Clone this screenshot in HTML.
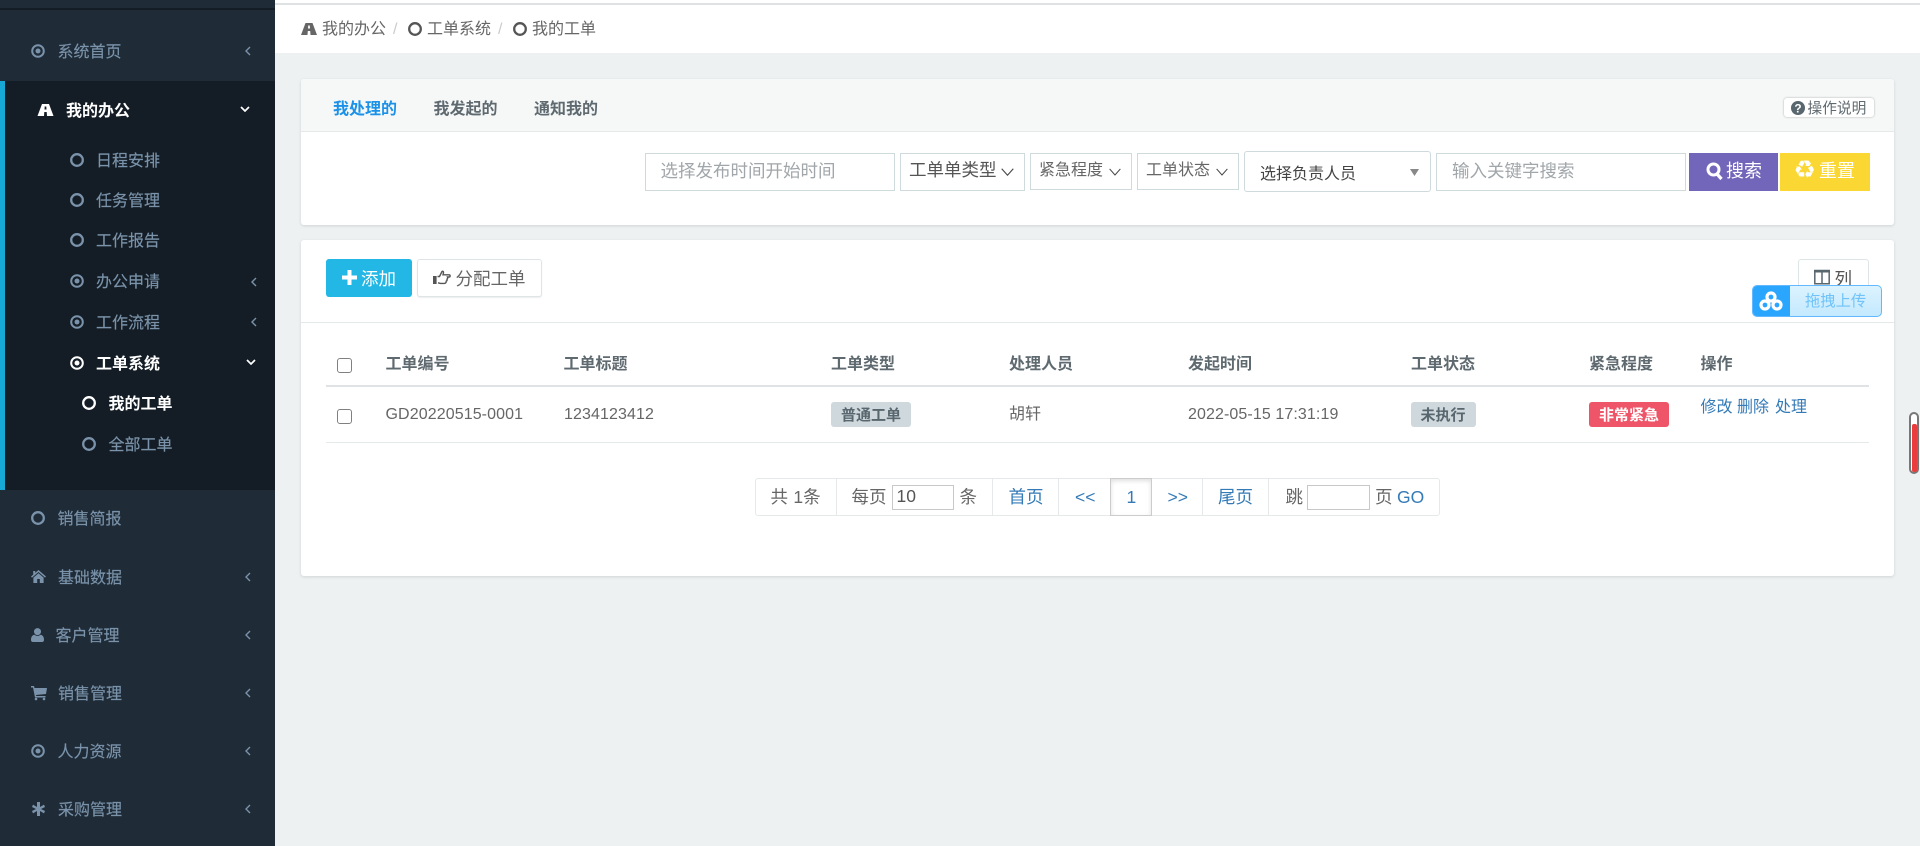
<!DOCTYPE html>
<html lang="zh-CN"><head><meta charset="utf-8"><title>我的工单</title>
<style>
html,body{margin:0;padding:0;width:1920px;height:846px;overflow:hidden;background:#edf1f2;}
body{position:relative;font-family:"Liberation Sans","Noto Sans CJK SC",sans-serif;font-size:16px;color:#58666e;}
.b,.t,svg.i{position:absolute;}
.b{box-sizing:border-box;}
.t{white-space:nowrap;line-height:20px;height:20px;margin-top:1px;}
.n{color:#7a93aa;}
div.n{margin-top:1.5px;-webkit-text-stroke:.15px #7a93aa;}
.w{color:#fff;font-weight:bold;margin-top:1.5px;}
.h{font-weight:bold;color:#5f6a70;}
.a{color:#337ab7;}
.p{color:#a0a6a9;font-size:17.5px;margin-top:0;}
.s{color:#666;font-size:17.5px;}
.pg{margin-top:-.5px;}
.card{background:#fff;box-shadow:0 1px 3px rgba(0,0,0,.12);border-radius:3px;}
.inp{background:#fff;border:1px solid #cfdadd;}
svg.i{fill:currentColor;overflow:visible;}
.stroke{fill:none;stroke:currentColor;}
.d{letter-spacing:.1px;}
</style></head><body>
<svg width="0" height="0" style="position:absolute">
<defs>
<symbol id="ring" viewBox="0 0 14 14"><circle cx="7" cy="7" r="5.8" fill="none" stroke="currentColor" stroke-width="2.3"/></symbol>
<symbol id="dot" viewBox="0 0 14 14"><circle cx="7" cy="7" r="5.8" fill="none" stroke="currentColor" stroke-width="2"/><circle cx="7" cy="7" r="2.5" fill="currentColor"/></symbol>
<symbol id="road" viewBox="0 0 16 12"><path fill="currentColor" fill-rule="evenodd" d="M4.5 0H11.5L16 12H9.5L9.2 8H6.8L6.5 12H0ZM7.2 2.5H8.8L9 5.5H7Z"/></symbol>
<symbol id="cl" viewBox="0 0 6 10"><path d="M5 1L1 5L5 9" fill="none" stroke="currentColor" stroke-width="1.4"/></symbol>
<symbol id="cd" viewBox="0 0 10 6"><path d="M1 1L5 5L9 1" fill="none" stroke="currentColor" stroke-width="1.7"/></symbol>
<symbol id="thin" viewBox="0 0 13 8"><path d="M.7.7L6.5 7.2L12.3.7" fill="none" stroke="currentColor" stroke-width="1.1"/></symbol>
</defs></svg>

<!-- sidebar -->
<div class="b" style="left:0;top:0;width:275px;height:846px;background:#1f2b37"></div>
<div class="b" style="left:0;top:8px;width:275px;height:2px;background:#141d26"></div>
<div class="b" style="left:0;top:81px;width:275px;height:409px;background:#141d26;border-left:5px solid #17a8d6"></div>

<svg class="i n" style="left:31px;top:44px" width="14" height="14"><use href="#dot"/></svg><div class="t n" style="left:57.5px;top:41px">系统首页</div><svg class="i n" style="left:245px;top:46px" width="6" height="10"><use href="#cl"/></svg>
<svg class="i" style="left:36.5px;top:104px;color:#fff" width="17" height="12"><use href="#road"/></svg><div class="t w" style="left:66px;top:100px">我的办公</div><svg class="i" style="left:240px;top:106px;color:#fff" width="10" height="6"><use href="#cd"/></svg>
<svg class="i n" style="left:70px;top:153px" width="14" height="14"><use href="#ring"/></svg><div class="t n" style="left:96px;top:150px">日程安排</div>
<svg class="i n" style="left:70px;top:193px" width="14" height="14"><use href="#ring"/></svg><div class="t n" style="left:96px;top:190px">任务管理</div>
<svg class="i n" style="left:70px;top:233px" width="14" height="14"><use href="#ring"/></svg><div class="t n" style="left:96px;top:230px">工作报告</div>
<svg class="i n" style="left:70px;top:274px" width="14" height="14"><use href="#dot"/></svg><div class="t n" style="left:96px;top:271px">办公申请</div><svg class="i n" style="left:251px;top:277px" width="6" height="10"><use href="#cl"/></svg>
<svg class="i n" style="left:70px;top:315px" width="14" height="14"><use href="#dot"/></svg><div class="t n" style="left:96px;top:312px">工作流程</div><svg class="i n" style="left:251px;top:317px" width="6" height="10"><use href="#cl"/></svg>
<svg class="i" style="left:70px;top:356px;color:#fff" width="14" height="14"><use href="#dot"/></svg><div class="t w" style="left:96px;top:353px">工单系统</div><svg class="i" style="left:246px;top:359px;color:#fff" width="10" height="6"><use href="#cd"/></svg>
<svg class="i" style="left:82px;top:396px;color:#fff" width="14" height="14"><use href="#ring"/></svg><div class="t w" style="left:108.5px;top:393px">我的工单</div>
<svg class="i n" style="left:82px;top:437px" width="14" height="14"><use href="#ring"/></svg><div class="t n" style="left:108.5px;top:434px">全部工单</div>

<svg class="i n" style="left:31px;top:511px" width="14" height="14"><use href="#ring"/></svg><div class="t n" style="left:57.5px;top:508px">销售简报</div>
<svg class="i n" style="left:31px;top:570px" width="15" height="13" viewBox="0 0 15 13"><path d="M7.5 0L15 6.5L14 7.6L7.5 2L1 7.6L0 6.5L2.2 4.6V1H4.2V2.9ZM2.4 7.6L7.5 3.3L12.6 7.6V13H8.8V9H6.2V13H2.4Z"/></svg><div class="t n" style="left:58px;top:567px">基础数据</div><svg class="i n" style="left:245px;top:572px" width="6" height="10"><use href="#cl"/></svg>
<svg class="i n" style="left:31px;top:628px" width="13" height="14" viewBox="0 0 13 14"><circle cx="6.5" cy="3.6" r="3.5"/><path d="M0 12C0 8.5 1.6 7 3.5 6.8C4.3 7.5 5.3 7.9 6.5 7.9S8.7 7.5 9.5 6.8C11.4 7 13 8.5 13 12C13 13.3 12.2 14 11 14H2C.8 14 0 13.3 0 12Z"/></svg><div class="t n" style="left:55.5px;top:625px">客户管理</div><svg class="i n" style="left:245px;top:630px" width="6" height="10"><use href="#cl"/></svg>
<svg class="i n" style="left:31px;top:686px" width="16" height="14" viewBox="0 0 16 14"><path d="M0 0H3L3.5 2H16L15 8L5 9L5.3 10H14.5V11.5H4L2 1.5H0Z"/><circle cx="5" cy="13" r="1.3"/><circle cx="13" cy="13" r="1.3"/></svg><div class="t n" style="left:58px;top:683px">销售管理</div><svg class="i n" style="left:245px;top:688px" width="6" height="10"><use href="#cl"/></svg>
<svg class="i n" style="left:31px;top:744px" width="14" height="14"><use href="#dot"/></svg><div class="t n" style="left:57.5px;top:741px">人力资源</div><svg class="i n" style="left:245px;top:746px" width="6" height="10"><use href="#cl"/></svg>
<svg class="i n" style="left:32px;top:802px" width="13" height="14" viewBox="0 0 13 14"><path d="M5 0H8V5L12 2.6L13 5L9 7L13 9L12 11.4L8 9V14H5V9L1 11.4L0 9L4 7L0 5L1 2.6L5 5Z"/></svg><div class="t n" style="left:58px;top:799px">采购管理</div><svg class="i n" style="left:245px;top:804px" width="6" height="10"><use href="#cl"/></svg>

<!-- breadcrumb -->
<div class="b" style="left:275px;top:0;width:1645px;height:4px;background:#fff"></div>
<div class="b" style="left:275px;top:3px;width:1645px;height:2px;background:#dfe2e3"></div>
<div class="b" style="left:275px;top:5px;width:1645px;height:48px;background:#fff"></div>
<svg class="i" style="left:300.5px;top:23px;color:#666" width="16" height="12"><use href="#road"/></svg>
<div class="t" style="left:322px;top:19px;color:#666">我的办公</div><div class="t" style="left:393px;top:19px;color:#ccc">/</div>
<svg class="i" style="left:408px;top:22px;color:#555" width="14" height="14"><use href="#ring"/></svg>
<div class="t" style="left:427px;top:19px;color:#666">工单系统</div><div class="t" style="left:498px;top:19px;color:#ccc">/</div>
<svg class="i" style="left:513px;top:22px;color:#555" width="14" height="14"><use href="#ring"/></svg>
<div class="t" style="left:532px;top:19px;color:#666">我的工单</div>

<!-- card 1 -->
<div class="b card" style="left:301px;top:79px;width:1593px;height:146px"></div>
<div class="b" style="left:301px;top:79px;width:1593px;height:53px;background:#f6f8f8;border-bottom:1px solid #e4e9ea;border-radius:3px 3px 0 0"></div>
<div class="t" style="left:333px;top:99px;font-weight:bold;color:#1c91e8">我处理的</div>
<div class="t h" style="left:433.5px;top:99px">我发起的</div>
<div class="t h" style="left:534px;top:99px">通知我的</div>
<div class="b" style="left:1784px;top:98px;width:90px;height:19px;background:#fff;border-radius:3px;box-shadow:0 0 2px rgba(0,0,0,.3)"></div>
<svg class="i" style="left:1791px;top:100.5px;color:#58666e" width="14" height="14" viewBox="0 0 13 13"><circle cx="6.5" cy="6.5" r="6.5"/><text x="6.5" y="10.5" font-size="11" font-weight="bold" text-anchor="middle" fill="#fff" font-family="Liberation Sans">?</text></svg>
<div class="t" style="left:1807.5px;top:98px;font-size:14.7px;color:#5f6a70">操作说明</div>

<div class="b inp" style="left:645px;top:153px;width:250px;height:38px"></div>
<div class="t p" style="left:660.5px;top:161px">选择发布时间开始时间</div>

<div class="b inp" style="left:900px;top:153px;width:125px;height:38px"></div>
<div class="t s" style="left:909px;top:160px;color:#555;margin-top:0">工单单类型</div>
<svg class="i" style="left:1001px;top:168px;color:#444" width="13" height="8"><use href="#thin"/></svg>

<div class="b inp" style="left:1030px;top:153px;width:102px;height:37px"></div>
<div class="t" style="left:1039px;top:160px;color:#666">紧急程度</div>
<svg class="i" style="left:1108.5px;top:168px;color:#444" width="12" height="8"><use href="#thin"/></svg>

<div class="b inp" style="left:1137px;top:153px;width:102px;height:37px"></div>
<div class="t" style="left:1146px;top:160px;color:#666">工单状态</div>
<svg class="i" style="left:1216px;top:168px;color:#444" width="12" height="8"><use href="#thin"/></svg>

<div class="b inp" style="left:1244px;top:151px;width:187px;height:41px;border-radius:3px"></div>
<div class="t" style="left:1260px;top:164px;color:#444">选择负责人员</div>
<svg class="i" style="left:1410px;top:169px;color:#888" width="9" height="7" viewBox="0 0 9 7"><path d="M0 0H9L4.5 7Z"/></svg>

<div class="b inp" style="left:1436px;top:153px;width:250px;height:38px"></div>
<div class="t p" style="left:1452px;top:161px">输入关键字搜索</div>

<div class="b" style="left:1689px;top:153px;width:89px;height:38px;background:#7266ba"></div>
<svg class="i" style="left:1706px;top:162px;color:#fff" width="17" height="19" viewBox="0 0 17 19"><circle cx="7.5" cy="7.5" r="5.5" fill="none" stroke="currentColor" stroke-width="3"/><path d="M11 12L15.5 17" stroke="currentColor" stroke-width="3.2" fill="none"/></svg>
<div class="t" style="left:1726px;top:161px;font-size:18px;color:#fff;margin-top:0">搜索</div>

<div class="b" style="left:1780px;top:153px;width:90px;height:38px;background:#fad733"></div>
<div class="t" style="left:1793.5px;top:160px;font-size:25px;color:#fff;font-family:'DejaVu Sans',sans-serif;font-weight:bold;margin-top:0">♻</div>
<div class="t" style="left:1819px;top:161px;font-size:18px;color:#fff;margin-top:0">重置</div>

<!-- card 2 -->
<div class="b card" style="left:301px;top:240px;width:1593px;height:336px"></div>
<div class="b" style="left:301px;top:322px;width:1593px;height:1px;background:#e4e9ea"></div>

<div class="b" style="left:326px;top:259px;width:86px;height:38px;background:#23b7e5;border-radius:3px"></div>
<svg class="i" style="left:342px;top:270px;color:#fff" width="15" height="15" viewBox="0 0 15 15"><path d="M5.5 0H9.5V5.5H15V9.5H9.5V15H5.5V9.5H0V5.5H5.5Z"/></svg>
<div class="t s" style="left:361px;top:268px;color:#fff">添加</div>

<div class="b" style="left:417px;top:259px;width:125px;height:38px;background:#fff;border:1px solid #dee5e7;border-radius:3px;box-shadow:0 1px 1px rgba(90,90,90,.1)"></div>
<svg class="i" style="left:433px;top:270px;color:#555" width="18" height="15" viewBox="0 0 18 15"><path class="stroke" stroke-width="1.4" d="M4.5 6.5H6.5L9 1.5C10 .8 10.5 1.5 10.5 2.5L10 4.8H16C17.5 4.8 17.5 7 16 7H14.5C15 8 14.5 9 14 9.2C14.4 10.2 13.8 11 13.2 11.2C13.3 12.6 12.5 13.4 11.5 13.4H7.5L5 12.8"/><path d="M0 6H3.6V14H0Z"/></svg>
<div class="t s" style="left:455.5px;top:268px;color:#666">分配工单</div>

<div class="b" style="left:1798px;top:259px;width:71px;height:38px;background:#fff;border:1px solid #dee5e7;border-radius:3px"></div>
<svg class="i" style="left:1814px;top:269px;color:#58666e" width="16" height="16" viewBox="0 0 16 16"><path class="stroke" stroke-width="1.5" d="M.8 1.5H15.2V14.8H.8ZM8 1.5V14.8"/><path d="M0 1H16V3.5H0Z"/></svg>
<div class="t s" style="left:1834.5px;top:268px;color:#555">列</div>

<div class="b" style="left:1751.5px;top:285px;width:130.5px;height:32px;border:1.5px solid #62b9ff;border-radius:5px;background:linear-gradient(#dcf3ff,#c4e9ff);overflow:hidden"><div style="width:37px;height:32px;background:#2ba6ff"></div></div>
<svg class="i" style="left:1759px;top:291px;color:#fff" width="24" height="20" viewBox="0 0 24 20"><g fill="none" stroke="#fff" stroke-width="3.2"><circle cx="12" cy="6" r="4"/><circle cx="6" cy="14" r="4"/><circle cx="18" cy="14" r="4"/></g></svg>
<div class="t" style="left:1805px;top:291px;font-size:15.3px;color:#6fc3f8">拖拽上传</div>

<!-- table -->
<div class="b" style="left:336.5px;top:358px;width:15.5px;height:15px;background:#fff;border:1.5px solid #808080;border-radius:3px"></div>
<div class="t h" style="left:385.5px;top:354px">工单编号</div>
<div class="t h" style="left:563.5px;top:354px">工单标题</div>
<div class="t h" style="left:831px;top:354px">工单类型</div>
<div class="t h" style="left:1009px;top:354px">处理人员</div>
<div class="t h" style="left:1188px;top:354px">发起时间</div>
<div class="t h" style="left:1411px;top:354px">工单状态</div>
<div class="t h" style="left:1589px;top:354px">紧急程度</div>
<div class="t h" style="left:1700.5px;top:354px">操作</div>
<div class="b" style="left:326px;top:385px;width:1543px;height:2px;background:#dfe3e5"></div>

<div class="b" style="left:336.5px;top:409px;width:15.5px;height:15px;background:#fff;border:1.5px solid #808080;border-radius:3px"></div>
<div class="t d" style="left:385.5px;top:404px;color:#666">GD20220515-0001</div>
<div class="t d" style="left:564px;top:404px;color:#666">1234123412</div>
<div class="b" style="left:831px;top:402px;width:80px;height:25px;background:#cfd8dd;border-radius:3px"></div>
<div class="t" style="left:841px;top:405px;font-size:15px;font-weight:bold;color:#58666e">普通工单</div>
<div class="t" style="left:1009px;top:404px;color:#666">胡轩</div>
<div class="t d" style="left:1188px;top:404px;color:#666">2022-05-15 17:31:19</div>
<div class="b" style="left:1411px;top:402px;width:65px;height:25px;background:#cfd8dd;border-radius:3px"></div>
<div class="t" style="left:1420.5px;top:405px;font-size:15px;font-weight:bold;color:#58666e">未执行</div>
<div class="b" style="left:1589px;top:402px;width:80px;height:25px;background:#ef5568;border-radius:3px"></div>
<div class="t" style="left:1599px;top:405px;font-size:15px;font-weight:bold;color:#fff">非常紧急</div>
<div class="t a" style="left:1700.5px;top:397px">修改</div>
<div class="t a" style="left:1737px;top:397px">删除</div>
<div class="t a" style="left:1775px;top:397px">处理</div>
<div class="b" style="left:326px;top:442px;width:1543px;height:1px;background:#e4e9ea"></div>

<!-- pagination -->
<div class="b" style="left:755px;top:478px;width:685px;height:38px;border:1px solid #e6e9ea;border-radius:3px;background:#fff"></div>
<div class="b" style="left:836px;top:478px;width:1px;height:38px;background:#e6e9ea"></div>
<div class="b" style="left:992px;top:478px;width:1px;height:38px;background:#e6e9ea"></div>
<div class="b" style="left:1058px;top:478px;width:1px;height:38px;background:#e6e9ea"></div>
<div class="b" style="left:1110px;top:478px;width:42px;height:38px;background:#fff;border:1px solid #ccc;box-shadow:inset 0 2px 5px rgba(0,0,0,.13)"></div>
<div class="b" style="left:1202px;top:478px;width:1px;height:38px;background:#e6e9ea"></div>
<div class="b" style="left:1268px;top:478px;width:1px;height:38px;background:#e6e9ea"></div>
<div class="t s pg" style="left:770.5px;top:487px;word-spacing:.5px">共 1条</div>
<div class="t s pg" style="left:851.5px;top:487px">每页</div>
<div class="b" style="left:892px;top:485px;width:62px;height:25px;border:1px solid #c8c8c8;background:#fff"></div>
<div class="t s pg" style="left:896.5px;top:486px;color:#555">10</div>
<div class="t s pg" style="left:959.5px;top:487px">条</div>
<div class="t s a pg" style="left:1008.5px;top:487px;color:#337ab7">首页</div>
<div class="t s a pg" style="left:1075px;top:487px;color:#337ab7">&lt;&lt;</div>
<div class="t s a pg" style="left:1126.5px;top:487px;color:#337ab7">1</div>
<div class="t s a pg" style="left:1167.5px;top:487px;color:#337ab7">&gt;&gt;</div>
<div class="t s a pg" style="left:1218px;top:487px;color:#337ab7">尾页</div>
<div class="t s pg" style="left:1285.5px;top:487px">跳</div>
<div class="b" style="left:1307px;top:485px;width:63px;height:25px;border:1px solid #c8c8c8;background:#fff"></div>
<div class="t s pg" style="left:1375px;top:487px">页</div>
<div class="t s a pg" style="left:1397px;top:487px;color:#337ab7">GO</div>

<!-- scroll indicator -->
<div class="b" style="left:1909px;top:412px;width:10px;height:62px;border:2px solid #777;border-radius:5px;background:#fff"></div>
<div class="b" style="left:1912px;top:424px;width:5px;height:48px;background:#ea3c3c;border-radius:2px"></div>
</body></html>
